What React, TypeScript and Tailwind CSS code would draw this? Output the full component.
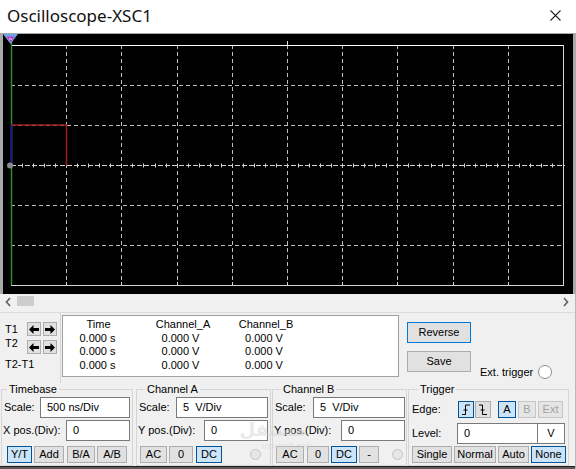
import React from "react";

type Variant = "normal" | "active" | "disabled" | "focus";

const variantCls: Record<Variant, string> = {
  normal: "bg-[#e1e1e1] border-[#adadad] text-black",
  active: "bg-[#cce4f7] border-[#005499] text-black",
  disabled: "bg-[#e5e5e5] border-[#c6c6c6] text-[#a2a2a2]",
  focus: "bg-[#e1e1e1] border-[#0078d7] text-black",
};

function Btn({
  children,
  className = "",
  variant = "normal",
}: {
  children?: React.ReactNode;
  className?: string;
  variant?: Variant;
}) {
  return (
    <button
      type="button"
      className={`flex h-[17px] shrink-0 items-center justify-center border leading-none ${variantCls[variant]} ${className}`}
    >
      {children}
    </button>
  );
}

function Field({ value, className = "" }: { value: string; className?: string }) {
  return (
    <div
      className={`flex h-[21px] shrink-0 items-center whitespace-pre border border-[#7a7a7a] bg-white pl-[6px] ${className}`}
    >
      {value}
    </div>
  );
}

function Group({
  title,
  className = "",
  legendCls = "",
  children,
}: {
  title: string;
  className?: string;
  legendCls?: string;
  children: React.ReactNode;
}) {
  return (
    <fieldset className={`h-[83px] shrink-0 border border-[#d6d6d6] ${className}`}>
      <legend className={`px-[2px] leading-[13px] ${legendCls}`}>{title}</legend>
      {children}
    </fieldset>
  );
}

function Radio({ dim = false }: { dim?: boolean }) {
  return (
    <div
      className={
        dim
          ? "h-[11px] w-[11px] rounded-full border border-[#c4c4c4] bg-[#e6e6e6]"
          : "h-[14px] w-[14px] rounded-full border border-[#8f8f8f] bg-white"
      }
    />
  );
}

function Arrow({ dir }: { dir: "left" | "right" }) {
  return (
    <button
      type="button"
      className="flex h-[14px] w-[14px] items-center justify-center border border-[#adadad] bg-[#e1e1e1]"
    >
      <svg width="10" height="9" viewBox="0 0 10 9">
        {dir === "left" ? (
          <path d="M0 4.5 L4.5 0 V3 H10 V6 H4.5 V9 Z" fill="#000" />
        ) : (
          <path d="M10 4.5 L5.5 0 V3 H0 V6 H5.5 V9 Z" fill="#000" />
        )}
      </svg>
    </button>
  );
}

function Scope() {
  const L = 8;
  const R = 560;
  const T = 11;
  const B = 251;
  const dx = (R - L) / 10;
  const px = (v: number) => Math.round(v) + 0.5;
  const xs = Array.from({ length: 9 }, (_, i) => px(L + (i + 1) * dx));
  const ys = [1, 2, 4, 5].map((j) => px(T + j * 40));
  const ticks = Array.from({ length: 51 }, (_, i) => px(L + (i * dx) / 5));
  const mid = px(T + 3 * 40);

  return (
    <svg width="570" height="260" className="block">
      {xs.map((x) => (
        <line key={`v${x}`} x1={x} y1={T} x2={x} y2={B} stroke="#bdbdbd" strokeDasharray="4 3" />
      ))}
      {ys.map((y) => (
        <line key={`h${y}`} x1={L} y1={y} x2={R} y2={y} stroke="#bdbdbd" strokeDasharray="4 3" />
      ))}
      {/* centre axis with ticks */}
      <line x1={L} y1={mid} x2={R + 2} y2={mid} stroke="#d2d2d2" strokeDasharray="5 2" />
      {ticks.map((x) => (
        <line key={`t${x}`} x1={x} y1={mid - 2} x2={x} y2={mid + 2} stroke="#d2d2d2" />
      ))}
      {xs.map((x) => (
        <line key={`b${x}`} x1={x} y1={B - 3} x2={x} y2={B} stroke="#d2d2d2" />
      ))}
      <line x1={px(284)} y1={T - 4} x2={px(284)} y2={T} stroke="#e0e0e0" />
      {/* frame */}
      <line x1={L} y1={T + 0.5} x2={R} y2={T + 0.5} stroke="#ffffff" />
      <line x1={L} y1={B + 0.5} x2={R + 1} y2={B + 0.5} stroke="#d4d4d4" />
      <line x1={R + 0.5} y1={T} x2={R + 0.5} y2={B} stroke="#d4d4d4" />
      {/* traces */}
      <line x1={L + 0.5} y1={6} x2={L + 0.5} y2={B} stroke="#2f8f2f" strokeWidth="1.5" />
      <path d={`M${L + 0.5} 91 H${xs[0]} V${mid}`} fill="none" stroke="#a11c1c" strokeWidth="1.5" />
      <line x1={L + 0.5} y1={91} x2={L + 0.5} y2={mid} stroke="#1d1d8a" strokeWidth="2" />
      <circle cx={7} cy={mid} r={3} fill="#8a8a8a" />
      {/* cursor marker */}
      <polygon points="0,0 15,0 7.5,10" fill="#6aa6e0" />
      <polygon points="3.5,2.5 11.5,2.5 7.5,8.5" fill="#c23cc8" />
      <line x1={6} y1={5} x2={9} y2={5} stroke="#ffffff" strokeWidth="0.8" />
    </svg>
  );
}

export default function App() {
  return (
    <div className="flex h-[469px] w-[576px] flex-col overflow-hidden bg-[#f0f0f0] font-['Liberation_Sans',Arial,sans-serif] text-[11px] text-black">
      {/* title bar */}
      <div className="flex h-[33px] shrink-0 items-center justify-between bg-white pb-[2px] pl-[7px] pr-[15px]">
        <span className="font-['Noto_Sans',sans-serif] text-[17px] text-[#111]">Oscilloscope-XSC1</span>
        <svg width="11" height="11" viewBox="0 0 11 11">
          <path d="M0.5 0.5 L10.5 10.5 M10.5 0.5 L0.5 10.5" stroke="#222" strokeWidth="1.1" />
        </svg>
      </div>

      {/* screen */}
      <div className="h-[261px] shrink-0 border-x-[3px] border-t border-[#a9a9a9] bg-black">
        <Scope />
      </div>

      <div className="flex flex-1 flex-col border-r border-[#b8b8b8]">
        {/* scrollbar */}
        <div className="flex h-[18px] shrink-0 items-start pl-[5px] pr-[6px] pt-[2px]">
          <svg width="6" height="10" viewBox="0 0 6 10" className="mt-[1px]">
            <path d="M5 1 L1.5 5 L5 9" fill="none" stroke="#606060" strokeWidth="1.6" />
          </svg>
          <div className="ml-[6px] h-[10px] w-[17px] bg-[#cdcdcd]" />
          <svg width="6" height="10" viewBox="0 0 6 10" className="ml-auto mt-[1px]">
            <path d="M1 1 L4.5 5 L1 9" fill="none" stroke="#606060" strokeWidth="1.6" />
          </svg>
        </div>

        {/* cursor readout */}
        <div className="flex h-[71px] shrink-0 border-t border-[#dcdcdc]">
          <div className="flex w-[61px] shrink-0 flex-col border-r border-[#d6d6d6] pl-[5px]">
            <div className="flex">
              <div className="flex w-[22px] flex-col pt-[10px] leading-[13.5px]">
                <span>T1</span>
                <span>T2</span>
              </div>
              <div className="flex flex-col gap-[4px] pt-[9px]">
                <div className="flex gap-[2px]">
                  <Arrow dir="left" />
                  <Arrow dir="right" />
                </div>
                <div className="flex gap-[2px]">
                  <Arrow dir="left" />
                  <Arrow dir="right" />
                </div>
              </div>
            </div>
            <span className="mt-[4px] leading-[13px]">T2-T1</span>
          </div>

          <div className="ml-[1px] mt-[2px] flex h-[62px] w-[337px] shrink-0 border border-[#a0a0a0] bg-white pt-[2px] leading-[13.5px]">
            <div className="flex w-[71px] flex-col items-center">
              <span>Time</span>
              <span className="pr-[2px]">0.000 s</span>
              <span className="pr-[2px]">0.000 s</span>
              <span className="pr-[2px]">0.000 s</span>
            </div>
            <div className="flex w-[98px] flex-col items-center">
              <span>Channel_A</span>
              <span className="pr-[5px]">0.000 V</span>
              <span className="pr-[5px]">0.000 V</span>
              <span className="pr-[5px]">0.000 V</span>
            </div>
            <div className="flex w-[68px] flex-col items-center">
              <span>Channel_B</span>
              <span className="pr-[4px]">0.000 V</span>
              <span className="pr-[4px]">0.000 V</span>
              <span className="pr-[4px]">0.000 V</span>
            </div>
          </div>

          <div className="ml-[8px] flex flex-col gap-[8px] pt-[9px]">
            <Btn variant="focus" className="h-[21px] w-[64px]">
              Reverse
            </Btn>
            <Btn className="h-[21px] w-[64px]">Save</Btn>
          </div>

          <div className="mb-[3px] ml-[9px] flex items-center gap-[5px] self-end">
            <span>Ext. trigger</span>
            <Radio />
          </div>
        </div>

        {/* control groups */}
        <div className="relative flex h-[83px] shrink-0">
          <Group title="Timebase" className="ml-[1px] w-[132px] pl-[1px] pr-[2px]" legendCls="ml-[4px]">
            <div className="mt-[1px] flex items-center justify-between">
              <span className="pl-[1px]">Scale:</span>
              <Field value="500 ns/Div" className="w-[90px]" />
            </div>
            <div className="mt-[2px] flex items-center justify-between">
              <span>X pos.(Div):</span>
              <Field value="0" className="w-[64px]" />
            </div>
            <div className="ml-[4px] mt-[5px] flex">
              <Btn variant="active" className="w-[25px]">Y/T</Btn>
              <Btn className="ml-[2px] w-[30px]">Add</Btn>
              <Btn className="ml-[3px] w-[28px]">B/A</Btn>
              <Btn className="ml-[2px] w-[30px]">A/B</Btn>
            </div>
          </Group>

          <Group title="Channel A" className="ml-[3px] w-[135px] pl-[1px] pr-[2px]" legendCls="ml-[7px]">
            <div className="mt-[1px] flex items-center justify-between">
              <span className="pl-[1px]">Scale:</span>
              <Field value="5  V/Div" className="w-[92px]" />
            </div>
            <div className="mt-[2px] flex items-center justify-between">
              <span>Y pos.(Div):</span>
              <Field value="0" className="w-[64px]" />
            </div>
            <div className="ml-[2px] mt-[5px] flex items-center">
              <Btn className="w-[27px]">AC</Btn>
              <Btn className="ml-[2px] w-[24px]">0</Btn>
              <Btn variant="active" className="ml-[3px] w-[26px]">DC</Btn>
              <div className="ml-[28px]">
                <Radio dim />
              </div>
            </div>
          </Group>

          <Group title="Channel B" className="ml-[1px] w-[135px] pl-[1px] pr-[1px]" legendCls="ml-[7px]">
            <div className="mt-[1px] flex items-center justify-between">
              <span className="pl-[1px]">Scale:</span>
              <Field value="5  V/Div" className="w-[92px]" />
            </div>
            <div className="mt-[2px] flex items-center justify-between">
              <span>Y pos.(Div):</span>
              <Field value="0" className="w-[64px]" />
            </div>
            <div className="ml-[2px] mt-[5px] flex items-center">
              <Btn className="w-[28px]">AC</Btn>
              <Btn className="ml-[3px] w-[22px]">0</Btn>
              <Btn variant="active" className="ml-[2px] w-[26px]">DC</Btn>
              <Btn className="ml-[2px] w-[20px]">-</Btn>
              <div className="ml-[13px]">
                <Radio dim />
              </div>
            </div>
          </Group>

          <Group title="Trigger" className="ml-[1px] w-[161px] pl-[3px]" legendCls="ml-[6px]">
            <div className="mt-[5px] flex items-center">
              <span className="w-[46px]">Edge:</span>
              <Btn variant="active" className="w-[16px]">
                <svg width="10" height="11" viewBox="0 0 10 11">
                  <path d="M1 10.5 H4.5 V1 H9 M2.5 6 H6.5" fill="none" stroke="#000" strokeWidth="1" />
                </svg>
              </Btn>
              <Btn className="ml-[1px] w-[16px]">
                <svg width="10" height="11" viewBox="0 0 10 11">
                  <path d="M1 1 H4.5 V10.5 H9 M2.5 6 H6.5" fill="none" stroke="#000" strokeWidth="1" />
                </svg>
              </Btn>
              <Btn variant="active" className="ml-[7px] w-[18px]">A</Btn>
              <Btn variant="disabled" className="ml-[2px] w-[18px]">B</Btn>
              <Btn variant="disabled" className="ml-[2px] w-[25px]">Ext</Btn>
            </div>
            <div className="mt-[5px] flex items-center">
              <span className="w-[45px]">Level:</span>
              <Field value="0" className="w-[81px]" />
              <div className="flex h-[21px] w-[27px] items-center justify-center border border-l-0 border-[#7a7a7a] bg-white">
                V
              </div>
            </div>
            <div className="mt-[2px] flex">
              <Btn className="w-[40px]">Single</Btn>
              <Btn className="ml-[2px] w-[42px]">Normal</Btn>
              <Btn className="ml-[2px] w-[31px]">Auto</Btn>
              <Btn variant="active" className="ml-[2px] w-[35px]">None</Btn>
            </div>
          </Group>

          {/* faint site watermark over the controls */}
          <div className="pointer-events-none absolute left-[232px] top-[38px] flex flex-col items-center leading-none text-[#d4d4d4] opacity-50">
            <span className="font-['DejaVu_Sans',sans-serif] text-[18px] font-bold">مستقل</span>
            <span className="mt-[3px] pl-[30px] text-[9px]">mostaql.com</span>
          </div>
        </div>

        <div className="h-[3px] shrink-0 border-t border-[#222] bg-[#5a5a5a]" />
      </div>
    </div>
  );
}
